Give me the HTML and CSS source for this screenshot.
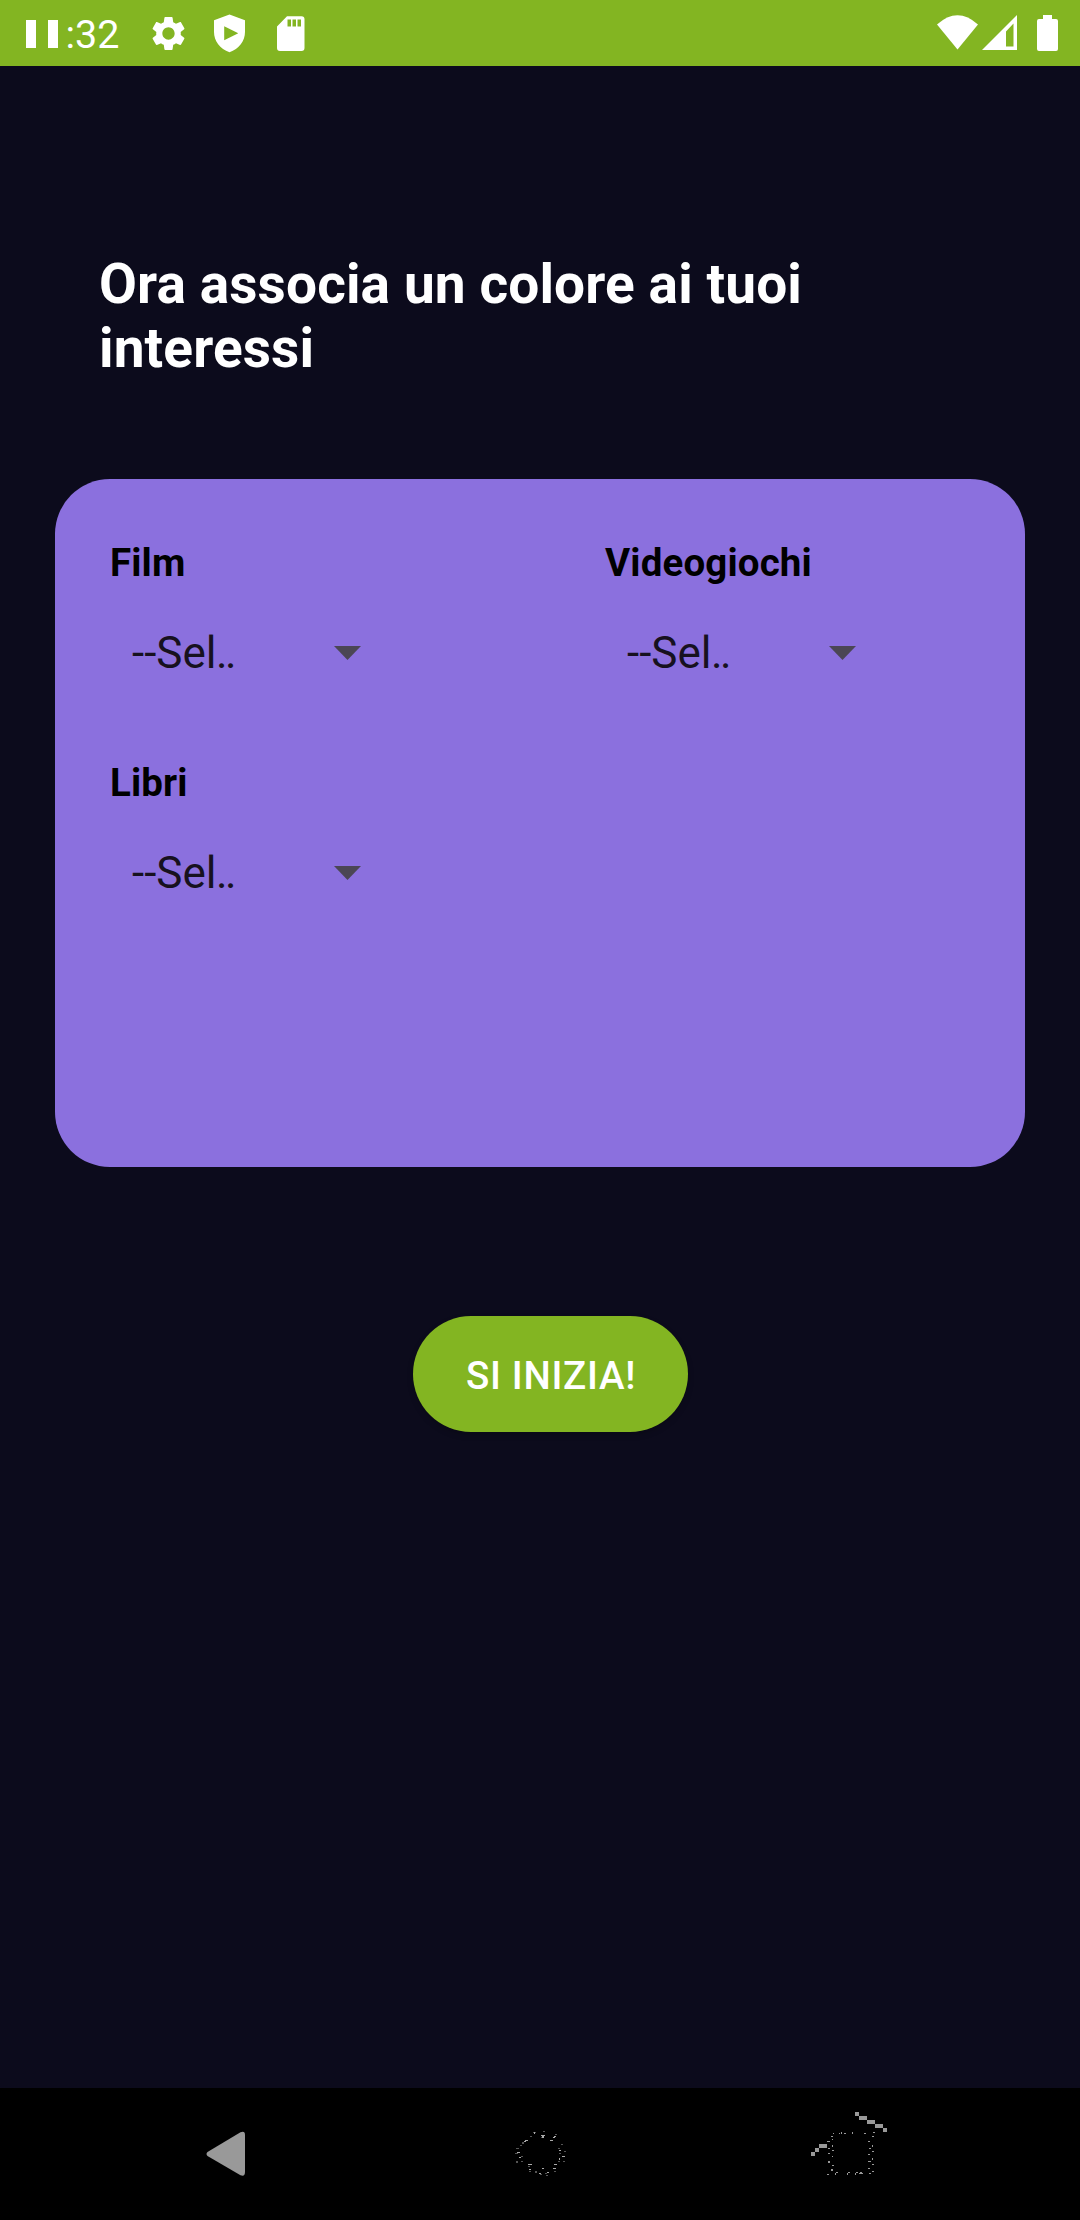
FILE: index.html
```html
<!DOCTYPE html>
<html lang="it">
<head>
<meta charset="utf-8">
<title>Interessi</title>
<link rel="stylesheet" href="styles.css">
</head>
<body>
<div class="screen">
  <header class="status">
    <div class="clock">
      <svg class="pause" width="32" height="28" viewBox="0 0 32 28"><path d="M0 0h10v28H0zM22 0h10v28H22z"/></svg>
      <span>:32</span>
    </div>
    <div class="notices">
      <svg width="41" height="41" viewBox="0 0 24 24"><path d="M19.14 12.94c.04-.3.06-.61.06-.94 0-.32-.02-.64-.07-.94l2.03-1.58c.18-.14.23-.41.12-.61l-1.92-3.32c-.12-.22-.37-.29-.59-.22l-2.39.96c-.5-.38-1.03-.7-1.62-.94l-.36-2.54c-.04-.24-.24-.41-.48-.41h-3.84c-.24 0-.43.17-.47.41l-.36 2.54c-.59.24-1.13.57-1.62.94l-2.39-.96c-.22-.08-.47 0-.59.22L2.74 8.87c-.12.21-.08.47.12.61l2.03 1.58c-.05.3-.09.63-.09.94s.02.64.07.94l-2.03 1.58c-.18.14-.23.41-.12.61l1.92 3.32c.12.22.37.29.59.22l2.39-.96c.5.38 1.03.7 1.62.94l.36 2.54c.05.24.24.41.48.41h3.84c.24 0 .44-.17.47-.41l.36-2.54c.59-.24 1.13-.56 1.62-.94l2.39.96c.22.08.47 0 .59-.22l1.92-3.32c.12-.22.07-.47-.12-.61l-2.01-1.58zM12 15.6c-1.98 0-3.6-1.62-3.6-3.6s1.62-3.6 3.6-3.6 3.6 1.62 3.6 3.6-1.62 3.6-3.6 3.6z"/></svg>
      <svg width="41" height="41" viewBox="0 0 41 41"><path fill-rule="evenodd" d="M20.5 1.500 36 7.300V19C36 28 30 36 20.500 39.200 11 36 5 28 5 19V7.300zM15.200 13.200V27.200L29.300 20.200z"/></svg>
      <svg width="41" height="41" viewBox="0 0 41 41"><path fill-rule="evenodd" d="M17 3.300H31.500Q34.500 3.300 34.500 6.300V35Q34.500 38 31.500 38H10Q7 38 7 35V13.500zM17.500 6.500V13.500H21V6.500zM22.500 6.500V13.500H26V6.500zM27.500 6.500V13.500H31V6.500z"/></svg>
    </div>
    <div class="signals">
      <svg width="41" height="35" viewBox="0 0 41 35"><path d="M0 9.500Q20.500-9 41 9.500L20.500 34.500z"/></svg>
      <svg width="35" height="35" viewBox="0 0 35 35"><path fill-rule="evenodd" d="M35 0V35H0zM24 16.500V31.500H31.500V8.500z"/></svg>
      <svg class="battery" width="21" height="36" viewBox="0 0 21 36"><path d="M6 0H15V4H19Q21 4 21 6V34Q21 36 19 36H2Q0 36 0 34V6Q0 4 2 4H6z"/></svg>
    </div>
  </header>
  <main class="content">
    <h1 class="title">Ora associa un colore ai tuoi interessi</h1>
    <section class="card">
      <div class="field">
        <div class="label">Film</div>
        <div class="select"><span>--Sel<span class="dots">..</span></span><svg width="27" height="14" viewBox="0 0 27 14"><path d="M0 0H27L13.500 14z"/></svg></div>
      </div>
      <div class="field">
        <div class="label">Videogiochi</div>
        <div class="select"><span>--Sel<span class="dots">..</span></span><svg width="27" height="14" viewBox="0 0 27 14"><path d="M0 0H27L13.500 14z"/></svg></div>
      </div>
      <div class="field">
        <div class="label">Libri</div>
        <div class="select"><span>--Sel<span class="dots">..</span></span><svg width="27" height="14" viewBox="0 0 27 14"><path d="M0 0H27L13.500 14z"/></svg></div>
      </div>
    </section>
    <button class="start">SI INIZIA!</button>
  </main>
  <nav class="navbar">
    <svg class="back" width="40" height="46" viewBox="0 0 40 46"><path d="M1.500 21 34.500 1.300Q39 -.5 39 4V41Q39 46 34.500 44.200L1.500 25Q-.5 23 1.500 21z"/></svg>
    <svg class="home" width="80" height="80" viewBox="0 0 80 80">
      <path class="faint" d="M33 22h3v1h-3zM43 21h2v1h-2zM55 24h2v1h-2zM30 26h2v1h-2zM41 27h2v1h-2zM22 32h2v2h-2zM20 35h2v1h-2zM16 38h3v1h-3zM15 43h3v1h-3zM21 46h2v1h-2zM16 51h2v2h-2zM21 51h2v1h-2zM28 56h2v1h-2zM29 61h2v1h-2zM35 61h2v2h-2zM40 64h2v1h-2zM45 63h2v1h-2zM46 65h2v1h-2zM54 61h2v1h-2zM58 51h2v1h-2zM59 43h2v1h-2zM58 38h2v1h-2zM61 34h2v1h-2zM64 41h2v1h-2zM63 51h2v1h-2z"/>
      <path d="M34 22h1v2h-1zM41 25h4v1h-4zM42 26h2v2h-2zM54 26h2v1h-2zM53 27h2v1h-2zM50 30h3v1h-3zM25 30h3v1h-3zM24 31h2v1h-2zM17 42h3v1h-3zM19 47h2v1h-2zM28 54h4v1h-4zM29 59h2v1h-2zM42 58h2v1h-2zM54 54h3v1h-3zM53 58h3v1h-3zM39 63h2v1h-2zM47 62h2v1h-2zM59 40h2v1h-2zM62 46h3v1h-3zM59 48h1v2h-1z"/>
    </svg>
    <svg class="recent" width="100" height="90" viewBox="0 0 100 90">
      <path d="M55 12h4v4h-4zM59 16h8v4h-8zM67 20h8v4h-8zM75 24h8v4h-8zM83 28h4v4h-4zM11 52h4v4h-4zM15 48h4v4h-4zM19 44h8v4h-8z"/>
      <path d="M33 33h1v1h-1zM39 33h1v1h-1zM41 32h1v2h-1zM44 33h2v1h-2zM52 32h1v2h-1zM64 33h2v1h-2zM73 32h2v1h-2zM31 36h2v1h-2zM32 39h1v1h-1zM27 41h3v1h-3zM32 45h1v2h-1zM28 48h2v1h-2zM32 50h2v1h-2zM28 53h2v1h-2zM32 56h1v1h-1zM28 61h2v2h-2zM32 65h2v1h-2zM31 69h2v2h-2zM27 74h2v1h-2zM36 72h2v1h-2zM35 73h1v2h-1zM48 72h2v1h-2zM47 73h1v2h-1zM56 72h2v1h-2zM55 73h1v2h-1zM60 72h2v1h-2zM59 73h4v1h-4zM69 73h2v1h-2zM72 36h2v1h-2zM68 41h2v1h-2zM72 45h1v2h-1zM69 48h2v1h-2zM72 51h2v1h-2zM68 54h2v1h-2zM72 58h1v2h-1zM68 61h3v1h-3zM72 64h2v1h-2zM68 68h2v1h-2zM72 71h2v1h-2z"/>
    </svg>
  </nav>
</div>
</body>
</html>
```
FILE: styles.css
```css
* { box-sizing: border-box; }
body { margin: 0; background: #0c0b1c; font-family: Roboto, "Liberation Sans", sans-serif; }
svg { display: block; flex: none; fill: currentColor; }
.screen { width: 1080px; height: 2220px; display: flex; flex-direction: column; }
.status { height: 66px; flex: none; background: #83b522; color: #fff; display: flex; }
.clock { width: 148px; padding-left: 26px; display: flex; font-size: 39.500px; line-height: 69px; }
.pause { margin: 20px 7.500px 0 0; }
.notices { display: flex; gap: 20px; padding-top: 13px; }
.signals { display: flex; gap: 4px; margin-left: auto; padding: 15px 22px 0 0; }
.battery { margin-left: 16px; }
.content { flex: 1; display: flex; flex-direction: column; padding: 186px 55px 0; }
.title { margin: 0 0 99px; padding: 0 44px; color: #fff; font-size: 55px; line-height: 64px; letter-spacing: .11px; font-weight: 700; }
.card { height: 688px; padding: 55px; border-radius: 55px; background: #8b70de; display: grid; grid-template-columns: 495px 1fr; grid-auto-rows: 220px; }
.label { font-size: 38.500px; line-height: 58px; letter-spacing: .15px; font-weight: 700; color: #000; }
.select { display: flex; align-items: center; justify-content: space-between; width: 251px; height: 66px; margin-top: 28px; padding-left: 22px; font-size: 44px; color: #17111f; }
.dots { letter-spacing: -2.500px; margin-left: -.5px; }
.select svg { color: #4b4655; margin-bottom: 1px; }
.start { margin: 149px 0 0 358px; padding: 2px 0 0 1px; width: 275px; height: 116px; border: 0; border-radius: 58px; background: #83b522; color: #fff; font-family: inherit; font-size: 38.500px; font-weight: 500; letter-spacing: .7px; box-shadow: 0 3px 6px #0003; }
.navbar { height: 132px; flex: none; background: #000; color: #999; display: flex; }
.back { margin: 43px 0 0 206px; }
.home { margin: 22px 0 0 254px; color: #aaa; }
.faint { fill: #555; }
.recent { margin: 12px 0 0 220px; }
```
